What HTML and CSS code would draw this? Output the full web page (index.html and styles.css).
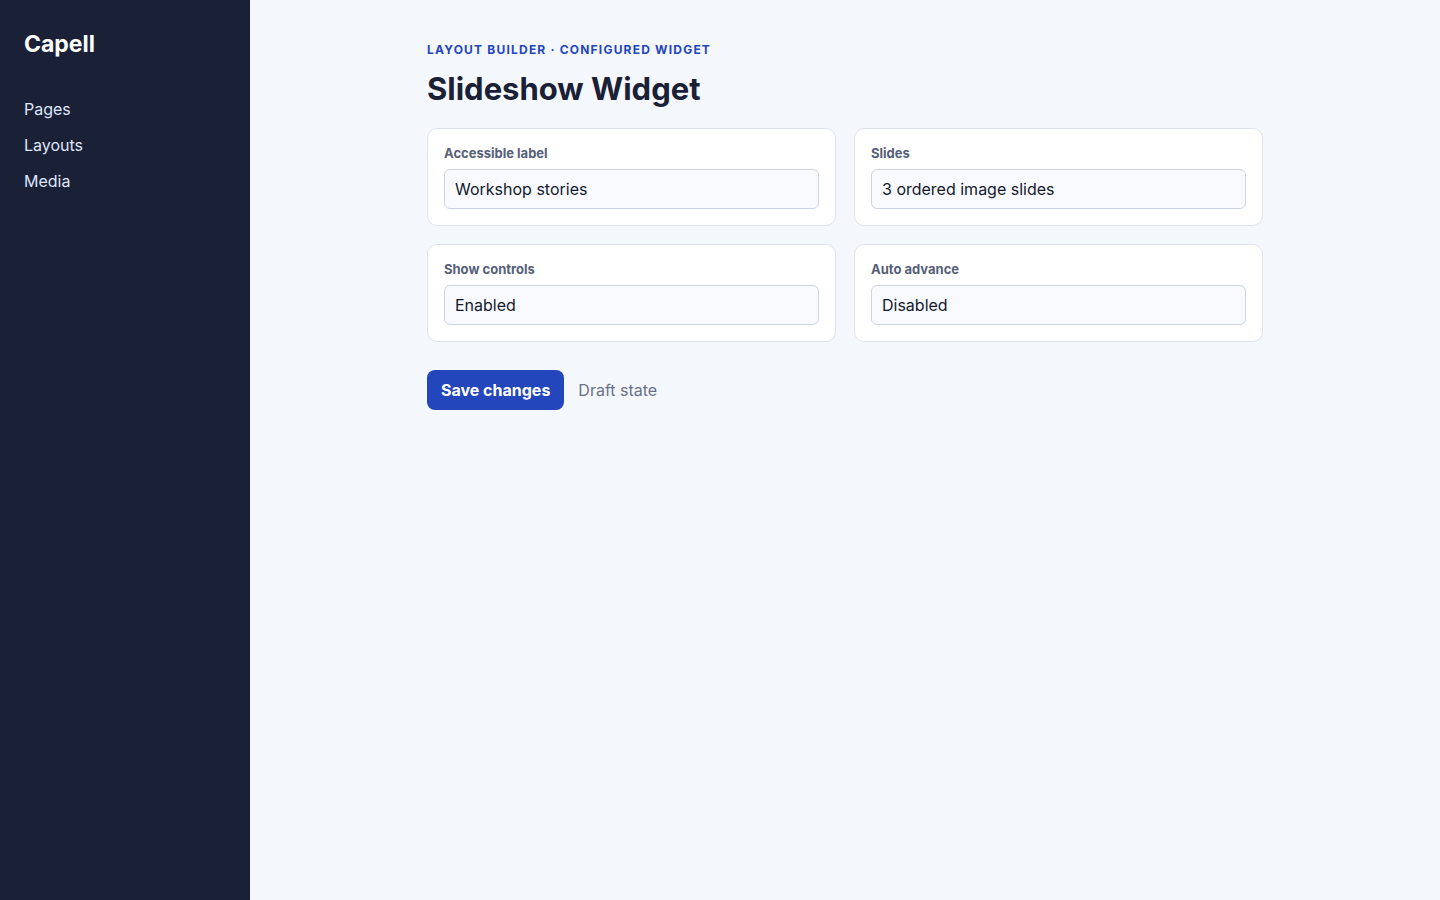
FILE: index.html
```html
<!DOCTYPE html>
<html lang="en">
<head>
  <meta charset="UTF-8">
  <meta name="viewport" content="width=device-width, initial-scale=1">
  <title>Slideshow Widget - Capell</title>
  <link rel="stylesheet" href="styles.css">
</head>
<body>
  <aside>
    <strong class="brand">Capell</strong>
    <nav>
      <a href="#">Pages</a>
      <a href="#">Layouts</a>
      <a href="#">Media</a>
    </nav>
  </aside>
  <main>
    <p class="eyebrow">Layout Builder · Configured Widget</p>
    <h1>Slideshow Widget</h1>
    <form>
      <div class="grid">
        <div class="card">
          <label for="label">Accessible label</label>
          <input id="label" type="text" value="Workshop stories">
        </div>
        <div class="card">
          <label for="slides">Slides</label>
          <input id="slides" type="text" value="3 ordered image slides">
        </div>
        <div class="card">
          <label for="controls">Show controls</label>
          <input id="controls" type="text" value="Enabled">
        </div>
        <div class="card">
          <label for="advance">Auto advance</label>
          <input id="advance" type="text" value="Disabled">
        </div>
      </div>
      <div class="actions">
        <button type="button">Save changes</button>
        <span class="state">Draft state</span>
      </div>
    </form>
  </main>
</body>
</html>
```
FILE: styles.css
```css
* { box-sizing: border-box; }
body { margin: 0; min-height: 100vh; display: grid; grid-template-columns: 250px 1fr; background: #f4f7fb; color: #1a2035; font: 16px/20px Inter, sans-serif; }
aside { padding: 30px 24px; background: #1a2035; }
.brand { display: block; margin-bottom: 40px; color: #fff; font-size: 23px; line-height: 29px; }
nav { display: grid; gap: 16px; }
nav a { color: #dfe5fb; text-decoration: none; }
main { width: 100%; max-width: 900px; margin: 0 auto; padding: 42px 32px; }
.eyebrow { margin: 0; color: #2346bc; font-size: 12px; line-height: 15px; font-weight: 700; letter-spacing: 0.1em; text-transform: uppercase; }
h1 { margin: 12px 0 20px; font-size: 31px; line-height: 39px; }
.grid { display: grid; grid-template-columns: 1fr 1fr; gap: 18px; }
.card { padding: 16px; background: #fff; border: 1px solid #dfe3ee; border-radius: 10px; }
label { display: block; margin-bottom: 8px; color: #566078; font-size: 13px; line-height: 16px; font-weight: 700; }
input { display: block; width: 100%; height: 40px; padding: 0 10px; border: 1px solid #cdd3e1; border-radius: 6px; background: #f8faff; color: #14192b; font: inherit; }
.actions { display: flex; align-items: center; gap: 14px; margin-top: 28px; }
button { height: 40px; padding: 0 14px; border: 0; border-radius: 8px; background: #2346bc; color: #fff; font: inherit; font-weight: 700; }
.state { color: #697089; }
```
